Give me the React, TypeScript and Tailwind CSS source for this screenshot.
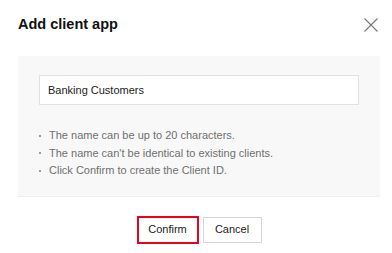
const tips = [
  "The name can be up to 20 characters.",
  "The name can't be identical to existing clients.",
  "Click Confirm to create the Client ID.",
];

export default function App() {
  return (
    <div className="h-[253px] w-[392px] bg-white font-['Liberation_Sans',Arial,sans-serif]">
      <div className="flex items-center justify-between pl-[18px] pr-[14px] pt-[14px]">
        <h2 className="text-[14.5px] font-bold leading-[20px] text-[#111]">Add client app</h2>
        <svg width="14" height="14" viewBox="0 0 14 14" className="mt-[1px] text-[#777]">
          <path d="M0.5 0.5L13.5 13.5M13.5 0.5L0.5 13.5" stroke="currentColor" strokeWidth="1.1" />
        </svg>
      </div>

      <div className="ml-[18px] mr-[12px] mt-[22px] border-b border-[#eeeeee] bg-[#f8f8f8] px-[21px] pb-[16px] pt-[19px]">
        <input
          defaultValue="Banking Customers"
          className="h-[30px] w-full border border-[#e2e2e2] bg-white px-[8px] text-[11px] text-[#222] outline-none"
        />
        <ul className="mt-[22px] text-[11px] leading-[17.5px] text-[#707070]">
          {tips.map((t) => (
            <li key={t} className="flex items-center">
              <span className="mr-[8px] h-[2px] w-[2px] bg-[#999]" />
              {t}
            </li>
          ))}
        </ul>
      </div>

      <div className="ml-[18px] mr-[12px] mt-[19px] flex justify-center gap-[4px]">
        <button className="flex h-[28px] w-[62px] items-center justify-center border-2 border-[#e8001c] bg-white text-[11px] text-[#222]">
          Confirm
        </button>
        <button className="mt-[1px] flex h-[26px] w-[59px] items-center justify-center border border-[#d6d6d6] bg-white text-[11px] text-[#222]">
          Cancel
        </button>
      </div>
    </div>
  );
}
